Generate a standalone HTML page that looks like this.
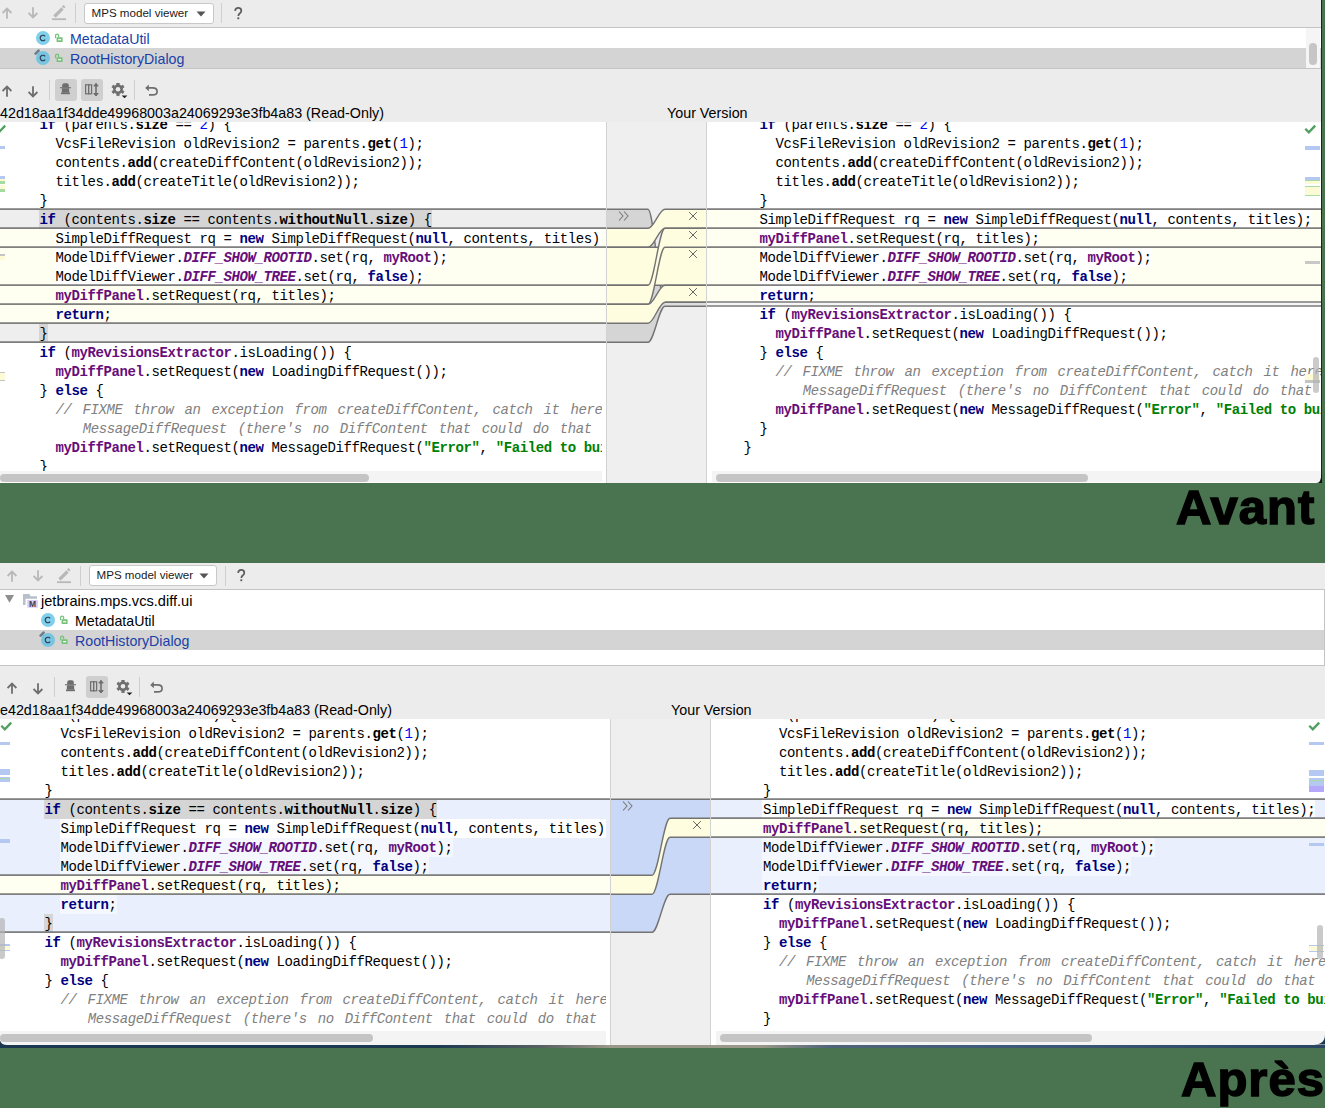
<!DOCTYPE html><html><head><meta charset="utf-8"><style>
*{margin:0;padding:0;box-sizing:border-box}
html,body{width:1325px;height:1108px;overflow:hidden;background:#4a7350;position:relative}
.ab{position:absolute}
.clip{position:absolute;overflow:hidden}
.ui{font-family:"Liberation Sans",sans-serif;white-space:nowrap}
.ln{position:absolute;font-family:"Liberation Mono",monospace;font-size:14px;letter-spacing:-0.4px;line-height:19px;height:19px;white-space:pre;color:#000;padding-top:1px}
.dd{background:#fff;border:1px solid #c8c8c8;border-radius:3px}
.big{position:absolute;font-family:"Liberation Sans",sans-serif;font-weight:bold;font-size:49px;line-height:50px;color:#000;white-space:nowrap;-webkit-text-stroke:1.5px #000;letter-spacing:1px}
</style></head><body>
<div class="ab" style="left:0;top:0px;width:1321px;height:27px;background:#ececec"></div>
<svg class="ab" style="left:2px;top:7px" width="11" height="12"><path d="M5 11.8V1.6M0.6 6L5 1.6L9.4 6" stroke="#b8b8b8" stroke-width="1.8" fill="none"/></svg>
<svg class="ab" style="left:28px;top:7px" width="11" height="12"><path d="M5 0.2V10.4M0.6 6L5 10.4L9.4 6" stroke="#b8b8b8" stroke-width="1.8" fill="none"/></svg>
<svg class="ab" style="left:51px;top:5px" width="16" height="16"><path d="M3.5 11.5L11.5 3.5" stroke="#b8b8b8" stroke-width="3.2" fill="none"/><path d="M12 2.5L13.5 1" stroke="#b8b8b8" stroke-width="3" fill="none"/><rect x="1" y="13.3" width="14" height="1.8" fill="#b8b8b8"/></svg>
<div class="ab" style="left:75px;top:3px;width:1px;height:20px;background:#cfcfcf"></div>
<div class="ab dd" style="left:83.5px;top:2.5px;width:130px;height:21px"></div>
<div class="ab ui" style="left:91.5px;top:5.0px;font-size:11.6px;line-height:16px;color:#1a1a1a">MPS model viewer</div>
<svg class="ab" style="left:195.5px;top:10.5px" width="10" height="6"><path d="M0.5 0.5H9.5L5 5.5Z" fill="#555"/></svg>
<div class="ab" style="left:221px;top:3px;width:1px;height:20px;background:#cfcfcf"></div>
<svg class="ab" style="left:233.6px;top:7.0px" width="10" height="13"><path d="M1.1 3.8Q1.5 0.9 4.2 0.9Q7.3 0.9 7.3 3.7Q7.3 5.1 5.9 6.2Q4.4 7.3 4.3 9" stroke="#5e5e5e" stroke-width="1.75" fill="none"/><rect x="3.35" y="10.3" width="1.9" height="1.9" fill="#5e5e5e"/></svg>
<div class="ab" style="left:0;top:27px;width:1321px;height:1px;background:#c4c4c4"></div>
<div class="ab" style="left:0;top:28px;width:1321px;height:40px;background:#fff"></div>
<svg class="ab" style="left:34px;top:29px" width="20" height="20"><circle cx="9" cy="9" r="7" fill="#80cfeb"/><path d="M11.1 7.3A2.75 2.75 0 1 0 11.1 10.7" stroke="#2e3c50" stroke-width="1.15" fill="none"/></svg>
<svg class="ab" style="left:53.8px;top:33px" width="10" height="11"><path d="M1.6 5.2V2.6Q1.6 1.1 3.1 1.1Q4.6 1.1 4.6 2.6V4.2" stroke="#76c27a" stroke-width="1.3" fill="none"/><rect x="2.6" y="4.2" width="6" height="4.9" rx="0.6" fill="#76c27a"/><rect x="4.1" y="6.1" width="3" height="1.2" fill="#fff"/></svg>
<div class="ab ui" style="left:70px;top:31px;font-size:14.2px;line-height:16px;color:#1a3fa8">MetadataUtil</div>
<div class="ab" style="left:0;top:48px;width:1321px;height:20px;background:#d4d4d4"></div>
<svg class="ab" style="left:34px;top:49px" width="20" height="20"><circle cx="9" cy="9" r="7" fill="#78c4e0"/><path d="M11.1 7.3A2.75 2.75 0 1 0 11.1 10.7" stroke="#2e3c50" stroke-width="1.15" fill="none"/><path d="M1.6 4.6L4.6 1.6" stroke="#6e7c8c" stroke-width="2.6" stroke-linecap="round"/></svg>
<svg class="ab" style="left:53.8px;top:53px" width="10" height="11"><path d="M1.6 5.2V2.6Q1.6 1.1 3.1 1.1Q4.6 1.1 4.6 2.6V4.2" stroke="#76c27a" stroke-width="1.3" fill="none"/><rect x="2.6" y="4.2" width="6" height="4.9" rx="0.6" fill="#76c27a"/><rect x="4.1" y="6.1" width="3" height="1.2" fill="#fff"/></svg>
<div class="ab ui" style="left:70px;top:51px;font-size:14.2px;line-height:16px;color:#1a3fa8">RootHistoryDialog</div>
<div class="ab" style="left:0;top:68px;width:1321px;height:1px;background:#c4c4c4"></div>
<div class="ab" style="left:1306px;top:28px;width:14px;height:40px;background:#f5f5f5"></div>
<div class="ab" style="left:1309px;top:43px;width:8px;height:22px;border-radius:4px;background:#c6c6c6"></div>
<div class="ab" style="left:0;top:69px;width:1321px;height:53px;background:#ececec"></div>
<svg class="ab" style="left:2px;top:85px" width="11" height="12"><path d="M5 11.8V1.6M0.6 6L5 1.6L9.4 6" stroke="#6e6e6e" stroke-width="1.8" fill="none"/></svg>
<svg class="ab" style="left:28px;top:85.5px" width="11" height="12"><path d="M5 0.2V10.4M0.6 6L5 10.4L9.4 6" stroke="#6e6e6e" stroke-width="1.8" fill="none"/></svg>
<div class="ab" style="left:49px;top:80px;width:1px;height:20px;background:#cfcfcf"></div>
<div class="ab" style="left:55px;top:79px;width:22px;height:22px;border-radius:3px;background:#cfcfcf"></div>
<svg class="ab" style="left:59px;top:83px" width="14" height="13"><path d="M3.2 4.6V2.2Q3.2 0.2 5.2 0.2H7.8Q9.8 0.2 9.8 2.2V4.6Z" fill="#6e6e6e"/><rect x="1" y="4.2" width="11" height="1.1" fill="#6e6e6e"/><path d="M3 5.3H10L10.3 9.8H2.7Z" fill="#6e6e6e"/><rect x="2" y="9.6" width="9" height="1.6" fill="#6e6e6e"/></svg>
<div class="ab" style="left:81px;top:79px;width:22px;height:22px;border-radius:3px;background:#cfcfcf"></div>
<svg class="ab" style="left:84px;top:83px" width="16" height="14"><rect x="1.6" y="1.8" width="3" height="9" stroke="#6e6e6e" stroke-width="1.2" fill="none"/><rect x="4.6" y="1.8" width="3" height="9" stroke="#6e6e6e" stroke-width="1.2" fill="none"/><path d="M12 0.5V13" stroke="#6e6e6e" stroke-width="1.6"/><path d="M9.8 3L12 0.5L14.2 3Z M9.8 10.5L12 13L14.2 10.5Z" fill="#6e6e6e" stroke="#6e6e6e" stroke-width="1"/></svg>
<svg class="ab" style="left:110px;top:83px" width="18" height="17"><g transform="translate(8,6.3)"><path d="M2.30 -3.98L1.11 -4.46L1.22 -6.28L-1.22 -6.28L-1.11 -4.46L-2.30 -3.98L-3.31 -3.20L-4.83 -4.20L-6.05 -2.08L-4.42 -1.27L-4.60 0.00L-4.42 1.27L-6.05 2.08L-4.83 4.20L-3.31 3.20L-2.30 3.98L-1.11 4.46L-1.22 6.28L1.22 6.28L1.11 4.46L2.30 3.98L3.31 3.20L4.83 4.20L6.05 2.08L4.42 1.27L4.60 0.00L4.42 -1.27L6.05 -2.08L4.83 -4.20L3.31 -3.20Z" fill="#6e6e6e" stroke="#6e6e6e" stroke-width="0.8" stroke-linejoin="round"/><circle r="2.3" fill="#ececec"/></g><path d="M11.6 12.4H17.4L14.5 15.3Z" fill="#222"/></svg>
<div class="ab" style="left:134px;top:80px;width:1px;height:20px;background:#cfcfcf"></div>
<svg class="ab" style="left:144px;top:83px" width="16" height="14"><path d="M4 4.9H8.6Q13.1 4.9 13.1 8.4Q13.1 11.9 8.6 11.9H5" stroke="#6e6e6e" stroke-width="1.7" fill="none"/><path d="M1.2 4.9L4.8 1.5V8.3Z" fill="#6e6e6e"/></svg>
<div class="ab ui" style="left:0px;top:105px;font-size:14.3px;line-height:16px;color:#000;white-space:nowrap">42d18aa1f34dde49968003a24069293e3fb4a83 (Read-Only)</div>
<div class="ab ui" style="left:667px;top:105px;font-size:14.3px;line-height:16px;color:#000;white-space:nowrap">Your Version</div>
<div class="ab" style="left:0;top:122px;width:606px;height:361px;background:#fff"></div>
<div class="ab" style="left:606px;top:122px;width:100px;height:361px;background:#efefef"></div>
<div class="ab" style="left:706px;top:122px;width:615px;height:361px;background:#fff"></div>
<div class="clip" style="left:0;top:122px;width:606px;height:361px">
<div class="ab" style="left:0;top:88px;width:606px;height:19px;background:#eeeeee"></div>
<div class="ab" style="left:0;top:107px;width:606px;height:95px;background:#fffff1"></div>
<div class="ab" style="left:0;top:202px;width:606px;height:19px;background:#eeeeee"></div>
<div class="clip" style="left:0;top:0;width:602px;height:361px">
<div class="ln" style="left:39.5px;top:-7px;"><span style="color:#000080;font-weight:bold">if</span> (parents.<span style="font-weight:bold">size</span> == <span style="color:#0000ff">2</span>) {</div>
<div class="ln" style="left:55.5px;top:12px;">VcsFileRevision oldRevision2 = parents.<span style="font-weight:bold">get</span>(<span style="color:#0000ff">1</span>);</div>
<div class="ln" style="left:55.5px;top:31px;">contents.<span style="font-weight:bold">add</span>(createDiffContent(oldRevision2));</div>
<div class="ln" style="left:55.5px;top:50px;">titles.<span style="font-weight:bold">add</span>(createTitle(oldRevision2));</div>
<div class="ln" style="left:39.5px;top:69px;">}</div>
<div class="ln" style="left:38.5px;top:88px;background:#d5d5d5;padding-left:1px;"><span style="color:#000080;font-weight:bold">if</span> (contents.<span style="font-weight:bold">size</span> == contents.<span style="font-weight:bold">withoutNull</span>.<span style="font-weight:bold">size</span>) {</div>
<div class="ln" style="left:54.5px;top:107px;background:#ffffff;padding-left:1px;">SimpleDiffRequest rq = <span style="color:#000080;font-weight:bold">new</span> SimpleDiffRequest(<span style="color:#000080;font-weight:bold">null</span>, contents, titles);</div>
<div class="ln" style="left:54.5px;top:126px;background:#ffffff;padding-left:1px;">ModelDiffViewer.<span style="color:#660e7a;font-weight:bold;font-style:italic">DIFF_SHOW_ROOTID</span>.set(rq, <span style="color:#660e7a;font-weight:bold">myRoot</span>);</div>
<div class="ln" style="left:54.5px;top:145px;background:#ffffff;padding-left:1px;">ModelDiffViewer.<span style="color:#660e7a;font-weight:bold;font-style:italic">DIFF_SHOW_TREE</span>.set(rq, <span style="color:#000080;font-weight:bold">false</span>);</div>
<div class="ln" style="left:55.5px;top:164px;"><span style="color:#660e7a;font-weight:bold">myDiffPanel</span>.setRequest(rq, titles);</div>
<div class="ln" style="left:55.5px;top:183px;"><span style="color:#000080;font-weight:bold">return</span>;</div>
<div class="ln" style="left:38.5px;top:202px;background:#d5d5d5;padding-left:1px;">}</div>
<div class="ln" style="left:39.5px;top:221px;"><span style="color:#000080;font-weight:bold">if</span> (<span style="color:#660e7a;font-weight:bold">myRevisionsExtractor</span>.isLoading()) {</div>
<div class="ln" style="left:55.5px;top:240px;"><span style="color:#660e7a;font-weight:bold">myDiffPanel</span>.setRequest(<span style="color:#000080;font-weight:bold">new</span> LoadingDiffRequest());</div>
<div class="ln" style="left:39.5px;top:259px;">} <span style="color:#000080;font-weight:bold">else</span> {</div>
<div class="ln" style="left:55.5px;top:278px;word-spacing:3px;"><span style="color:#808080;font-style:italic">// FIXME throw an exception from createDiffContent, catch it here and create</span></div>
<div class="ln" style="left:82.7px;top:297px;word-spacing:3px;"><span style="color:#808080;font-style:italic">MessageDiffRequest (there&#x27;s no DiffContent that could do that</span></div>
<div class="ln" style="left:55.5px;top:316px;"><span style="color:#660e7a;font-weight:bold">myDiffPanel</span>.setRequest(<span style="color:#000080;font-weight:bold">new</span> MessageDiffRequest(<span style="color:#008000;font-weight:bold">&quot;Error&quot;</span>, <span style="color:#008000;font-weight:bold">&quot;Failed to build diff&quot;</span>));</div>
<div class="ln" style="left:39.5px;top:335px;">}</div>
</div>
<svg class="ab" style="left:0;top:85px" width="606" height="4"><rect x="0" y="1.3" width="606" height="1.6" fill="#737373"/></svg>
<svg class="ab" style="left:0;top:104px" width="606" height="4"><rect x="0" y="1.3" width="606" height="1.6" fill="#737373"/></svg>
<svg class="ab" style="left:0;top:123px" width="606" height="4"><rect x="0" y="1.3" width="606" height="1.6" fill="#737373"/></svg>
<svg class="ab" style="left:0;top:161px" width="606" height="4"><rect x="0" y="1.3" width="606" height="1.6" fill="#737373"/></svg>
<svg class="ab" style="left:0;top:180px" width="606" height="4"><rect x="0" y="1.3" width="606" height="1.6" fill="#737373"/></svg>
<svg class="ab" style="left:0;top:199px" width="606" height="4"><rect x="0" y="1.3" width="606" height="1.6" fill="#737373"/></svg>
<svg class="ab" style="left:0;top:218px" width="606" height="4"><rect x="0" y="1.3" width="606" height="1.6" fill="#737373"/></svg>
</div>
<div class="clip" style="left:707px;top:122px;width:614px;height:361px">
<div class="ab" style="left:0;top:88px;width:1321px;height:95px;background:#fffff1"></div>
<div class="ln" style="left:52.5px;top:-7px;"><span style="color:#000080;font-weight:bold">if</span> (parents.<span style="font-weight:bold">size</span> == <span style="color:#0000ff">2</span>) {</div>
<div class="ln" style="left:68.5px;top:12px;">VcsFileRevision oldRevision2 = parents.<span style="font-weight:bold">get</span>(<span style="color:#0000ff">1</span>);</div>
<div class="ln" style="left:68.5px;top:31px;">contents.<span style="font-weight:bold">add</span>(createDiffContent(oldRevision2));</div>
<div class="ln" style="left:68.5px;top:50px;">titles.<span style="font-weight:bold">add</span>(createTitle(oldRevision2));</div>
<div class="ln" style="left:52.5px;top:69px;">}</div>
<div class="ln" style="left:51.5px;top:88px;background:#ffffff;padding-left:1px;">SimpleDiffRequest rq = <span style="color:#000080;font-weight:bold">new</span> SimpleDiffRequest(<span style="color:#000080;font-weight:bold">null</span>, contents, titles);</div>
<div class="ln" style="left:51.5px;top:107px;background:#ffffff;padding-left:1px;"><span style="color:#660e7a;font-weight:bold">myDiffPanel</span>.setRequest(rq, titles);</div>
<div class="ln" style="left:51.5px;top:126px;background:#ffffff;padding-left:1px;">ModelDiffViewer.<span style="color:#660e7a;font-weight:bold;font-style:italic">DIFF_SHOW_ROOTID</span>.set(rq, <span style="color:#660e7a;font-weight:bold">myRoot</span>);</div>
<div class="ln" style="left:51.5px;top:145px;background:#ffffff;padding-left:1px;">ModelDiffViewer.<span style="color:#660e7a;font-weight:bold;font-style:italic">DIFF_SHOW_TREE</span>.set(rq, <span style="color:#000080;font-weight:bold">false</span>);</div>
<div class="ln" style="left:51.5px;top:164px;background:#ffffff;padding-left:1px;"><span style="color:#000080;font-weight:bold">return</span>;</div>
<div class="ln" style="left:52.5px;top:183px;"><span style="color:#000080;font-weight:bold">if</span> (<span style="color:#660e7a;font-weight:bold">myRevisionsExtractor</span>.isLoading()) {</div>
<div class="ln" style="left:68.5px;top:202px;"><span style="color:#660e7a;font-weight:bold">myDiffPanel</span>.setRequest(<span style="color:#000080;font-weight:bold">new</span> LoadingDiffRequest());</div>
<div class="ln" style="left:52.5px;top:221px;">} <span style="color:#000080;font-weight:bold">else</span> {</div>
<div class="ln" style="left:68.5px;top:240px;word-spacing:3px;"><span style="color:#808080;font-style:italic">// FIXME throw an exception from createDiffContent, catch it here and create</span></div>
<div class="ln" style="left:95.7px;top:259px;word-spacing:3px;"><span style="color:#808080;font-style:italic">MessageDiffRequest (there&#x27;s no DiffContent that could do that</span></div>
<div class="ln" style="left:68.5px;top:278px;"><span style="color:#660e7a;font-weight:bold">myDiffPanel</span>.setRequest(<span style="color:#000080;font-weight:bold">new</span> MessageDiffRequest(<span style="color:#008000;font-weight:bold">&quot;Error&quot;</span>, <span style="color:#008000;font-weight:bold">&quot;Failed to build diff&quot;</span>));</div>
<div class="ln" style="left:52.5px;top:297px;">}</div>
<div class="ln" style="left:36.5px;top:316px;">}</div>
<svg class="ab" style="left:0;top:178.2px" width="1321" height="8"><rect x="0" y="2" width="1321" height="4.0" fill="#f6f6f6"/><rect x="0" y="1.3" width="1321" height="1.4" fill="#737373"/><rect x="0" y="5.3" width="1321" height="1.4" fill="#737373"/></svg>
<svg class="ab" style="left:0;top:85px" width="1321" height="4"><rect x="0" y="1.3" width="1321" height="1.6" fill="#737373"/></svg>
<svg class="ab" style="left:0;top:104px" width="1321" height="4"><rect x="0" y="1.3" width="1321" height="1.6" fill="#737373"/></svg>
<svg class="ab" style="left:0;top:123px" width="1321" height="4"><rect x="0" y="1.3" width="1321" height="1.6" fill="#737373"/></svg>
<svg class="ab" style="left:0;top:161px" width="1321" height="4"><rect x="0" y="1.3" width="1321" height="1.6" fill="#737373"/></svg>
</div>
<svg class="ab" style="left:606px;top:122px" width="101" height="361">
<path d="M0 87.3H42C47.95 87.3 53.05 180.2 59 180.2H100V184.2H59C53.05 184.2 47.95 220.3 42 220.3H0Z" fill="#d5d5d5"/>
<path d="M0 87.3H42C47.95 87.3 53.05 180.2 59 180.2H100" stroke="#737373" stroke-width="1.4" fill="none"/>
<path d="M0 220.3H42C47.95 220.3 53.05 184.2 59 184.2H100" stroke="#737373" stroke-width="1.4" fill="none"/>
<path d="M0 106.3H42C47.95 106.3 53.05 87.3 59 87.3H100V106.3H59C53.05 106.3 47.95 125.3 42 125.3H0Z" fill="#fefde0"/>
<path d="M0 106.3H42C47.95 106.3 53.05 87.3 59 87.3H100" stroke="#737373" stroke-width="1.4" fill="none"/>
<path d="M0 125.3H42C47.95 125.3 53.05 106.3 59 106.3H100" stroke="#737373" stroke-width="1.4" fill="none"/>
<path d="M0 125.3H42C47.95 125.3 53.05 125.3 59 125.3H100V163.3H59C53.05 163.3 47.95 163.3 42 163.3H0Z" fill="#fefde0"/>
<path d="M0 125.3H42C47.95 125.3 53.05 125.3 59 125.3H100" stroke="#737373" stroke-width="1.4" fill="none"/>
<path d="M0 163.3H42C47.95 163.3 53.05 163.3 59 163.3H100" stroke="#737373" stroke-width="1.4" fill="none"/>
<path d="M0 163.3H42C47.95 163.3 53.05 106.3 59 106.3H100V125.3H59C53.05 125.3 47.95 182.3 42 182.3H0Z" fill="#fefde0"/>
<path d="M0 163.3H42C47.95 163.3 53.05 106.3 59 106.3H100" stroke="#737373" stroke-width="1.4" fill="none"/>
<path d="M0 182.3H42C47.95 182.3 53.05 125.3 59 125.3H100" stroke="#737373" stroke-width="1.4" fill="none"/>
<path d="M0 182.3H42C47.95 182.3 53.05 163.3 59 163.3H100V180.2H59C53.05 180.2 47.95 201.3 42 201.3H0Z" fill="#fefde0"/>
<path d="M0 182.3H42C47.95 182.3 53.05 163.3 59 163.3H100" stroke="#737373" stroke-width="1.4" fill="none"/>
<path d="M0 201.3H42C47.95 201.3 53.05 180.2 59 180.2H100" stroke="#737373" stroke-width="1.4" fill="none"/>
<rect x="59" y="180.2" width="41" height="4.0" fill="#dedede"/>
<path d="M59 180.2H100M59 184.2H100" stroke="#737373" stroke-width="1.4"/>
<rect x="0" y="0" width="1" height="361" fill="#d2d2d2"/><rect x="100" y="0" width="1" height="361" fill="#d2d2d2"/>
<path d="M83.1 90.1L90.9 97.9M90.9 90.1L83.1 97.9" stroke="#666" stroke-width="1.0"/>
<path d="M83.1 109.1L90.9 116.9M90.9 109.1L83.1 116.9" stroke="#666" stroke-width="1.0"/>
<path d="M83.1 128.1L90.9 135.9M90.9 128.1L83.1 135.9" stroke="#666" stroke-width="1.0"/>
<path d="M83.1 166.1L90.9 173.9M90.9 166.1L83.1 173.9" stroke="#666" stroke-width="1.0"/>
<path d="M13 89.5L17 94L13 98.5M18 89.5L22 94L18 98.5" stroke="#7a7a7a" stroke-width="1.1" fill="none"/>
</svg>
<div class="ab" style="left:0;top:471px;width:602px;height:11px;background:#f4f4f4"></div>
<div class="ab" style="left:0;top:474px;width:369px;height:8px;border-radius:4px;background:#c4c4c4"></div>
<div class="ab" style="left:712px;top:471px;width:609px;height:11px;background:#f4f4f4"></div>
<div class="ab" style="left:716px;top:474px;width:372px;height:8px;border-radius:4px;background:#c4c4c4"></div>
<div class="ab" style="left:0px;top:146px;width:5px;height:3px;background:#b4c8f2"></div>
<div class="ab" style="left:0px;top:176px;width:5px;height:3px;background:#b4c8f2"></div>
<div class="ab" style="left:0px;top:179px;width:5px;height:2px;background:#fdfbd6"></div>
<div class="ab" style="left:0px;top:181px;width:5px;height:3px;background:#a6dba4"></div>
<div class="ab" style="left:0px;top:185px;width:5px;height:4px;background:#fdfbd6"></div>
<div class="ab" style="left:0px;top:189px;width:5px;height:3px;background:#a6dba4"></div>
<div class="ab" style="left:0px;top:254px;width:5px;height:2px;background:#c4c4c4"></div>
<div class="ab" style="left:0px;top:256px;width:5px;height:4px;background:#fdfbd6"></div>
<div class="ab" style="left:0px;top:372px;width:5px;height:1px;background:#c4c4c4"></div>
<div class="ab" style="left:0px;top:373px;width:5px;height:7px;background:#fdfbd6"></div>
<div class="ab" style="left:0px;top:380px;width:5px;height:1px;background:#c4c4c4"></div>
<div class="ab" style="left:1305px;top:146px;width:15px;height:4px;background:#b4c8f2"></div>
<div class="ab" style="left:1305px;top:177px;width:15px;height:3px;background:#b4c8f2"></div>
<div class="ab" style="left:1305px;top:180px;width:15px;height:1px;background:#a6dba4"></div>
<div class="ab" style="left:1305px;top:181px;width:15px;height:3px;background:#fdfbd6"></div>
<div class="ab" style="left:1305px;top:186px;width:15px;height:1px;background:#a6dba4"></div>
<div class="ab" style="left:1305px;top:187px;width:15px;height:8px;background:#fdfbd6"></div>
<div class="ab" style="left:1305px;top:195px;width:15px;height:1px;background:#a6dba4"></div>
<div class="ab" style="left:1305px;top:261px;width:15px;height:3px;background:#c8c8c8"></div>
<div class="ab" style="left:1305px;top:374px;width:15px;height:6px;background:#fdfbd6"></div>
<div class="ab" style="left:1305px;top:380px;width:15px;height:3px;background:#c4c4c4"></div>
<svg class="ab" style="left:-6px;top:124px" width="13" height="10"><path d="M1.3 4.8L4.8 8.3L11.2 1.6" stroke="#4f9f5f" stroke-width="2.3" fill="none" stroke-linejoin="miter"/></svg>
<svg class="ab" style="left:1304px;top:124px" width="13" height="10"><path d="M1.3 4.8L4.8 8.3L11.2 1.6" stroke="#4f9f5f" stroke-width="2.3" fill="none" stroke-linejoin="miter"/></svg>
<div class="ab" style="left:1313px;top:357px;width:6px;height:36px;border-radius:3px;background:rgba(180,180,180,0.7)"></div>
<div class="ab" style="left:1321px;top:0;width:1px;height:483px;background:#142434"></div>
<svg class="ab" style="left:1310px;top:470px" width="13" height="14"><path d="M11.2 4.5Q11.2 13 6.5 13H12V4.5Z" fill="#101312"/></svg>
<div class="big" style="left:1176px;top:482px">Avant</div>
<div class="ab" style="left:0;top:563px;width:1325px;height:26px;background:#ececec"></div>
<svg class="ab" style="left:7px;top:570px" width="11" height="12"><path d="M5 11.8V1.6M0.6 6L5 1.6L9.4 6" stroke="#b8b8b8" stroke-width="1.8" fill="none"/></svg>
<svg class="ab" style="left:33px;top:570px" width="11" height="12"><path d="M5 0.2V10.4M0.6 6L5 10.4L9.4 6" stroke="#b8b8b8" stroke-width="1.8" fill="none"/></svg>
<svg class="ab" style="left:56px;top:568px" width="16" height="16"><path d="M3.5 11.5L11.5 3.5" stroke="#b8b8b8" stroke-width="3.2" fill="none"/><path d="M12 2.5L13.5 1" stroke="#b8b8b8" stroke-width="3" fill="none"/><rect x="1" y="13.3" width="14" height="1.8" fill="#b8b8b8"/></svg>
<div class="ab" style="left:80px;top:566px;width:1px;height:20px;background:#cfcfcf"></div>
<div class="ab dd" style="left:88.5px;top:564.5px;width:128px;height:21px"></div>
<div class="ab ui" style="left:96.5px;top:567.0px;font-size:11.6px;line-height:16px;color:#1a1a1a">MPS model viewer</div>
<svg class="ab" style="left:199px;top:572.5px" width="10" height="6"><path d="M0.5 0.5H9.5L5 5.5Z" fill="#555"/></svg>
<div class="ab" style="left:224.5px;top:566px;width:1px;height:20px;background:#cfcfcf"></div>
<svg class="ab" style="left:236.6px;top:569.1px" width="10" height="13"><path d="M1.1 3.8Q1.5 0.9 4.2 0.9Q7.3 0.9 7.3 3.7Q7.3 5.1 5.9 6.2Q4.4 7.3 4.3 9" stroke="#5e5e5e" stroke-width="1.75" fill="none"/><rect x="3.35" y="10.3" width="1.9" height="1.9" fill="#5e5e5e"/></svg>
<div class="ab" style="left:0;top:589px;width:1325px;height:1px;background:#c4c4c4"></div>
<div class="ab" style="left:0;top:590px;width:1325px;height:75px;background:#fff"></div>
<svg class="ab" style="left:5px;top:595px" width="10" height="9"><path d="M0 0H9L4.5 7.8Z" fill="#8f8f8f"/></svg>
<svg class="ab" style="left:23px;top:594px" width="16" height="15"><path d="M0 0H6.5L7.5 2.2H14V4.8H2.5V11H0Z" fill="#b8c0cc"/><rect x="4.2" y="6" width="10.6" height="7.7" fill="#dcccfa"/><text x="9.5" y="12.6" font-size="8.5" font-weight="bold" font-family="Liberation Sans" text-anchor="middle" fill="#444">M</text></svg>
<div class="ab ui" style="left:41px;top:592.5px;font-size:14.6px;line-height:16px;color:#000">jetbrains.mps.vcs.diff.ui</div>
<svg class="ab" style="left:39px;top:611px" width="20" height="20"><circle cx="9" cy="9" r="7" fill="#80cfeb"/><path d="M11.1 7.3A2.75 2.75 0 1 0 11.1 10.7" stroke="#2e3c50" stroke-width="1.15" fill="none"/></svg>
<svg class="ab" style="left:58.8px;top:615px" width="10" height="11"><path d="M1.6 5.2V2.6Q1.6 1.1 3.1 1.1Q4.6 1.1 4.6 2.6V4.2" stroke="#76c27a" stroke-width="1.3" fill="none"/><rect x="2.6" y="4.2" width="6" height="4.9" rx="0.6" fill="#76c27a"/><rect x="4.1" y="6.1" width="3" height="1.2" fill="#fff"/></svg>
<div class="ab ui" style="left:75px;top:613px;font-size:14.2px;line-height:16px;color:#000">MetadataUtil</div>
<div class="ab" style="left:0;top:630px;width:1325px;height:20px;background:#d4d4d4"></div>
<svg class="ab" style="left:39px;top:631px" width="20" height="20"><circle cx="9" cy="9" r="7" fill="#78c4e0"/><path d="M11.1 7.3A2.75 2.75 0 1 0 11.1 10.7" stroke="#2e3c50" stroke-width="1.15" fill="none"/><path d="M1.6 4.6L4.6 1.6" stroke="#6e7c8c" stroke-width="2.6" stroke-linecap="round"/></svg>
<svg class="ab" style="left:58.8px;top:635px" width="10" height="11"><path d="M1.6 5.2V2.6Q1.6 1.1 3.1 1.1Q4.6 1.1 4.6 2.6V4.2" stroke="#76c27a" stroke-width="1.3" fill="none"/><rect x="2.6" y="4.2" width="6" height="4.9" rx="0.6" fill="#76c27a"/><rect x="4.1" y="6.1" width="3" height="1.2" fill="#fff"/></svg>
<div class="ab ui" style="left:75px;top:633px;font-size:14.2px;line-height:16px;color:#1a3fa8">RootHistoryDialog</div>
<div class="ab" style="left:0;top:665px;width:1325px;height:1px;background:#c4c4c4"></div>
<div class="ab" style="left:1324px;top:589px;width:1px;height:77px;background:#c4c4c4"></div>
<div class="ab" style="left:0;top:666px;width:1325px;height:53px;background:#ececec"></div>
<svg class="ab" style="left:7px;top:682px" width="11" height="12"><path d="M5 11.8V1.6M0.6 6L5 1.6L9.4 6" stroke="#6e6e6e" stroke-width="1.8" fill="none"/></svg>
<svg class="ab" style="left:33px;top:682.5px" width="11" height="12"><path d="M5 0.2V10.4M0.6 6L5 10.4L9.4 6" stroke="#6e6e6e" stroke-width="1.8" fill="none"/></svg>
<div class="ab" style="left:54px;top:677px;width:1px;height:20px;background:#cfcfcf"></div>
<svg class="ab" style="left:64px;top:680px" width="14" height="13"><path d="M3.2 4.6V2.2Q3.2 0.2 5.2 0.2H7.8Q9.8 0.2 9.8 2.2V4.6Z" fill="#6e6e6e"/><rect x="1" y="4.2" width="11" height="1.1" fill="#6e6e6e"/><path d="M3 5.3H10L10.3 9.8H2.7Z" fill="#6e6e6e"/><rect x="2" y="9.6" width="9" height="1.6" fill="#6e6e6e"/></svg>
<div class="ab" style="left:86px;top:676px;width:22px;height:22px;border-radius:3px;background:#cfcfcf"></div>
<svg class="ab" style="left:89px;top:680px" width="16" height="14"><rect x="1.6" y="1.8" width="3" height="9" stroke="#6e6e6e" stroke-width="1.2" fill="none"/><rect x="4.6" y="1.8" width="3" height="9" stroke="#6e6e6e" stroke-width="1.2" fill="none"/><path d="M12 0.5V13" stroke="#6e6e6e" stroke-width="1.6"/><path d="M9.8 3L12 0.5L14.2 3Z M9.8 10.5L12 13L14.2 10.5Z" fill="#6e6e6e" stroke="#6e6e6e" stroke-width="1"/></svg>
<svg class="ab" style="left:115px;top:680px" width="18" height="17"><g transform="translate(8,6.3)"><path d="M2.30 -3.98L1.11 -4.46L1.22 -6.28L-1.22 -6.28L-1.11 -4.46L-2.30 -3.98L-3.31 -3.20L-4.83 -4.20L-6.05 -2.08L-4.42 -1.27L-4.60 0.00L-4.42 1.27L-6.05 2.08L-4.83 4.20L-3.31 3.20L-2.30 3.98L-1.11 4.46L-1.22 6.28L1.22 6.28L1.11 4.46L2.30 3.98L3.31 3.20L4.83 4.20L6.05 2.08L4.42 1.27L4.60 0.00L4.42 -1.27L6.05 -2.08L4.83 -4.20L3.31 -3.20Z" fill="#6e6e6e" stroke="#6e6e6e" stroke-width="0.8" stroke-linejoin="round"/><circle r="2.3" fill="#ececec"/></g><path d="M11.6 12.4H17.4L14.5 15.3Z" fill="#222"/></svg>
<div class="ab" style="left:139px;top:677px;width:1px;height:20px;background:#cfcfcf"></div>
<svg class="ab" style="left:149px;top:680px" width="16" height="14"><path d="M4 4.9H8.6Q13.1 4.9 13.1 8.4Q13.1 11.9 8.6 11.9H5" stroke="#6e6e6e" stroke-width="1.7" fill="none"/><path d="M1.2 4.9L4.8 1.5V8.3Z" fill="#6e6e6e"/></svg>
<div class="ab ui" style="left:0px;top:702px;font-size:14.3px;line-height:16px;color:#000;white-space:nowrap">e42d18aa1f34dde49968003a24069293e3fb4a83 (Read-Only)</div>
<div class="ab ui" style="left:671px;top:702px;font-size:14.3px;line-height:16px;color:#000;white-space:nowrap">Your Version</div>
<div class="ab" style="left:0;top:719px;width:610px;height:326px;background:#fff"></div>
<div class="ab" style="left:610px;top:719px;width:100px;height:326px;background:#efefef"></div>
<div class="ab" style="left:710px;top:719px;width:615px;height:326px;background:#fff"></div>
<div class="clip" style="left:0;top:719px;width:610px;height:326px">
<div class="ab" style="left:0;top:81px;width:610px;height:133px;background:#e9effd"></div>
<div class="ab" style="left:0;top:157px;width:610px;height:19px;background:#fffff1"></div>
<div class="clip" style="left:0;top:0;width:606px;height:326px">
<div class="ln" style="left:44.5px;top:-14px;"><span style="color:#000080;font-weight:bold">if</span> (parents.<span style="font-weight:bold">size</span> == <span style="color:#0000ff">2</span>) {</div>
<div class="ln" style="left:60.5px;top:5px;">VcsFileRevision oldRevision2 = parents.<span style="font-weight:bold">get</span>(<span style="color:#0000ff">1</span>);</div>
<div class="ln" style="left:60.5px;top:24px;">contents.<span style="font-weight:bold">add</span>(createDiffContent(oldRevision2));</div>
<div class="ln" style="left:60.5px;top:43px;">titles.<span style="font-weight:bold">add</span>(createTitle(oldRevision2));</div>
<div class="ln" style="left:44.5px;top:62px;">}</div>
<div class="ln" style="left:43.5px;top:81px;background:#d5d5d5;padding-left:1px;"><span style="color:#000080;font-weight:bold">if</span> (contents.<span style="font-weight:bold">size</span> == contents.<span style="font-weight:bold">withoutNull</span>.<span style="font-weight:bold">size</span>) {</div>
<div class="ln" style="left:59.5px;top:100px;background:#ffffff;padding-left:1px;">SimpleDiffRequest rq = <span style="color:#000080;font-weight:bold">new</span> SimpleDiffRequest(<span style="color:#000080;font-weight:bold">null</span>, contents, titles);</div>
<div class="ln" style="left:59.5px;top:119px;background:#f4f7fd;padding-left:1px;">ModelDiffViewer.<span style="color:#660e7a;font-weight:bold;font-style:italic">DIFF_SHOW_ROOTID</span>.set(rq, <span style="color:#660e7a;font-weight:bold">myRoot</span>);</div>
<div class="ln" style="left:59.5px;top:138px;background:#f4f7fd;padding-left:1px;">ModelDiffViewer.<span style="color:#660e7a;font-weight:bold;font-style:italic">DIFF_SHOW_TREE</span>.set(rq, <span style="color:#000080;font-weight:bold">false</span>);</div>
<div class="ln" style="left:60.5px;top:157px;"><span style="color:#660e7a;font-weight:bold">myDiffPanel</span>.setRequest(rq, titles);</div>
<div class="ln" style="left:59.5px;top:176px;background:#f4f7fd;padding-left:1px;"><span style="color:#000080;font-weight:bold">return</span>;</div>
<div class="ln" style="left:43.5px;top:195px;background:#d5d5d5;padding-left:1px;">}</div>
<div class="ln" style="left:44.5px;top:214px;"><span style="color:#000080;font-weight:bold">if</span> (<span style="color:#660e7a;font-weight:bold">myRevisionsExtractor</span>.isLoading()) {</div>
<div class="ln" style="left:60.5px;top:233px;"><span style="color:#660e7a;font-weight:bold">myDiffPanel</span>.setRequest(<span style="color:#000080;font-weight:bold">new</span> LoadingDiffRequest());</div>
<div class="ln" style="left:44.5px;top:252px;">} <span style="color:#000080;font-weight:bold">else</span> {</div>
<div class="ln" style="left:60.5px;top:271px;word-spacing:3px;"><span style="color:#808080;font-style:italic">// FIXME throw an exception from createDiffContent, catch it here and create</span></div>
<div class="ln" style="left:87.7px;top:290px;word-spacing:3px;"><span style="color:#808080;font-style:italic">MessageDiffRequest (there&#x27;s no DiffContent that could do that</span></div>
<div class="ln" style="left:60.5px;top:309px;"><span style="color:#660e7a;font-weight:bold">myDiffPanel</span>.setRequest(<span style="color:#000080;font-weight:bold">new</span> MessageDiffRequest(<span style="color:#008000;font-weight:bold">&quot;Error&quot;</span>, <span style="color:#008000;font-weight:bold">&quot;Failed to build diff&quot;</span>));</div>
<div class="ln" style="left:44.5px;top:328px;">}</div>
</div>
<svg class="ab" style="left:0;top:78px" width="610" height="4"><rect x="0" y="1.3" width="610" height="1.6" fill="#737373"/></svg>
<svg class="ab" style="left:0;top:154px" width="610" height="4"><rect x="0" y="1.3" width="610" height="1.6" fill="#737373"/></svg>
<svg class="ab" style="left:0;top:173px" width="610" height="4"><rect x="0" y="1.3" width="610" height="1.6" fill="#737373"/></svg>
<svg class="ab" style="left:0;top:211px" width="610" height="4"><rect x="0" y="1.3" width="610" height="1.6" fill="#737373"/></svg>
</div>
<div class="clip" style="left:711px;top:719px;width:614px;height:326px">
<div class="ab" style="left:0;top:81px;width:1325px;height:95px;background:#e9effd"></div>
<div class="ab" style="left:0;top:100px;width:1325px;height:19px;background:#fffff1"></div>
<div class="ln" style="left:52px;top:-14px;"><span style="color:#000080;font-weight:bold">if</span> (parents.<span style="font-weight:bold">size</span> == <span style="color:#0000ff">2</span>) {</div>
<div class="ln" style="left:68px;top:5px;">VcsFileRevision oldRevision2 = parents.<span style="font-weight:bold">get</span>(<span style="color:#0000ff">1</span>);</div>
<div class="ln" style="left:68px;top:24px;">contents.<span style="font-weight:bold">add</span>(createDiffContent(oldRevision2));</div>
<div class="ln" style="left:68px;top:43px;">titles.<span style="font-weight:bold">add</span>(createTitle(oldRevision2));</div>
<div class="ln" style="left:52px;top:62px;">}</div>
<div class="ln" style="left:51px;top:81px;background:#ffffff;padding-left:1px;">SimpleDiffRequest rq = <span style="color:#000080;font-weight:bold">new</span> SimpleDiffRequest(<span style="color:#000080;font-weight:bold">null</span>, contents, titles);</div>
<div class="ln" style="left:52px;top:100px;"><span style="color:#660e7a;font-weight:bold">myDiffPanel</span>.setRequest(rq, titles);</div>
<div class="ln" style="left:51px;top:119px;background:#f4f7fd;padding-left:1px;">ModelDiffViewer.<span style="color:#660e7a;font-weight:bold;font-style:italic">DIFF_SHOW_ROOTID</span>.set(rq, <span style="color:#660e7a;font-weight:bold">myRoot</span>);</div>
<div class="ln" style="left:51px;top:138px;background:#f4f7fd;padding-left:1px;">ModelDiffViewer.<span style="color:#660e7a;font-weight:bold;font-style:italic">DIFF_SHOW_TREE</span>.set(rq, <span style="color:#000080;font-weight:bold">false</span>);</div>
<div class="ln" style="left:51px;top:157px;background:#f4f7fd;padding-left:1px;"><span style="color:#000080;font-weight:bold">return</span>;</div>
<div class="ln" style="left:52px;top:176px;"><span style="color:#000080;font-weight:bold">if</span> (<span style="color:#660e7a;font-weight:bold">myRevisionsExtractor</span>.isLoading()) {</div>
<div class="ln" style="left:68px;top:195px;"><span style="color:#660e7a;font-weight:bold">myDiffPanel</span>.setRequest(<span style="color:#000080;font-weight:bold">new</span> LoadingDiffRequest());</div>
<div class="ln" style="left:52px;top:214px;">} <span style="color:#000080;font-weight:bold">else</span> {</div>
<div class="ln" style="left:68px;top:233px;word-spacing:3px;"><span style="color:#808080;font-style:italic">// FIXME throw an exception from createDiffContent, catch it here and create</span></div>
<div class="ln" style="left:95.2px;top:252px;word-spacing:3px;"><span style="color:#808080;font-style:italic">MessageDiffRequest (there&#x27;s no DiffContent that could do that</span></div>
<div class="ln" style="left:68px;top:271px;"><span style="color:#660e7a;font-weight:bold">myDiffPanel</span>.setRequest(<span style="color:#000080;font-weight:bold">new</span> MessageDiffRequest(<span style="color:#008000;font-weight:bold">&quot;Error&quot;</span>, <span style="color:#008000;font-weight:bold">&quot;Failed to build diff&quot;</span>));</div>
<div class="ln" style="left:52px;top:290px;">}</div>
<div class="ln" style="left:36px;top:309px;">}</div>
<svg class="ab" style="left:0;top:78px" width="1325" height="4"><rect x="0" y="1.3" width="1325" height="1.6" fill="#737373"/></svg>
<svg class="ab" style="left:0;top:97px" width="1325" height="4"><rect x="0" y="1.3" width="1325" height="1.6" fill="#737373"/></svg>
<svg class="ab" style="left:0;top:116px" width="1325" height="4"><rect x="0" y="1.3" width="1325" height="1.6" fill="#737373"/></svg>
<svg class="ab" style="left:0;top:173px" width="1325" height="4"><rect x="0" y="1.3" width="1325" height="1.6" fill="#737373"/></svg>
</div>
<svg class="ab" style="left:610px;top:719px" width="101" height="326">
<path d="M0 80.3H42C48.3 80.3 53.7 80.3 60 80.3H100V175.3H60C53.7 175.3 48.3 213.3 42 213.3H0Z" fill="#c8d8f6"/>
<path d="M0 80.3H42C48.3 80.3 53.7 80.3 60 80.3H100" stroke="#737373" stroke-width="1.4" fill="none"/>
<path d="M0 213.3H42C48.3 213.3 53.7 175.3 60 175.3H100" stroke="#737373" stroke-width="1.4" fill="none"/>
<path d="M0 156.3H42C48.3 156.3 53.7 99.3 60 99.3H100V118.3H60C53.7 118.3 48.3 175.3 42 175.3H0Z" fill="#fefde0"/>
<path d="M0 156.3H42C48.3 156.3 53.7 99.3 60 99.3H100" stroke="#737373" stroke-width="1.4" fill="none"/>
<path d="M0 175.3H42C48.3 175.3 53.7 118.3 60 118.3H100" stroke="#737373" stroke-width="1.4" fill="none"/>
<rect x="0" y="0" width="1" height="326" fill="#d2d2d2"/><rect x="100" y="0" width="1" height="326" fill="#d2d2d2"/>
<path d="M83.1 102.1L90.9 109.9M90.9 102.1L83.1 109.9" stroke="#666" stroke-width="1.0"/>
<path d="M13 82.5L17 87L13 91.5M18 82.5L22 87L18 91.5" stroke="#7a7a7a" stroke-width="1.1" fill="none"/>
</svg>
<div class="ab" style="left:0;top:1031px;width:606px;height:14px;background:#f4f4f4"></div>
<div class="ab" style="left:0;top:1034px;width:373px;height:8px;border-radius:4px;background:#c4c4c4"></div>
<div class="ab" style="left:716px;top:1031px;width:609px;height:14px;background:#f4f4f4"></div>
<div class="ab" style="left:720px;top:1034px;width:372px;height:8px;border-radius:4px;background:#c4c4c4"></div>
<div class="ab" style="left:0px;top:742px;width:10px;height:3px;background:#b4c8f2"></div>
<div class="ab" style="left:0px;top:769px;width:10px;height:6px;background:#b4c8f2"></div>
<div class="ab" style="left:0px;top:777px;width:10px;height:5px;background:#b4c8f2"></div>
<div class="ab" style="left:0px;top:778px;width:10px;height:1px;background:#a6dba4"></div>
<div class="ab" style="left:0px;top:839px;width:10px;height:4px;background:#b4c8f2"></div>
<div class="ab" style="left:0px;top:943.5px;width:10px;height:3px;background:#b4c8f2"></div>
<div class="ab" style="left:0px;top:946px;width:10px;height:4px;background:#fdfbd6"></div>
<div class="ab" style="left:0px;top:950px;width:10px;height:1px;background:#b4c8f2"></div>
<div class="ab" style="left:1309px;top:742px;width:15px;height:3px;background:#b4c8f2"></div>
<div class="ab" style="left:1309px;top:770px;width:15px;height:6px;background:#b4c8f2"></div>
<div class="ab" style="left:1309px;top:778px;width:15px;height:8px;background:#b4c8f2"></div>
<div class="ab" style="left:1309px;top:780px;width:15px;height:1px;background:#a6dba4"></div>
<div class="ab" style="left:1309px;top:786px;width:15px;height:6px;background:#b5a8fa"></div>
<div class="ab" style="left:1309px;top:843px;width:15px;height:3px;background:#b4c8f2"></div>
<div class="ab" style="left:1309px;top:945px;width:15px;height:1px;background:#b4c8f2"></div>
<div class="ab" style="left:1309px;top:946px;width:15px;height:5px;background:#fdfbd6"></div>
<div class="ab" style="left:1309px;top:951px;width:15px;height:1px;background:#b4c8f2"></div>
<svg class="ab" style="left:0px;top:721px" width="13" height="10"><path d="M1.3 4.8L4.8 8.3L11.2 1.6" stroke="#4f9f5f" stroke-width="2.3" fill="none" stroke-linejoin="miter"/></svg>
<svg class="ab" style="left:1308px;top:721px" width="13" height="10"><path d="M1.3 4.8L4.8 8.3L11.2 1.6" stroke="#4f9f5f" stroke-width="2.3" fill="none" stroke-linejoin="miter"/></svg>
<div class="ab" style="left:1317px;top:925px;width:6px;height:34px;border-radius:3px;background:rgba(180,180,180,0.7)"></div>
<div class="ab" style="left:-1px;top:918px;width:5.5px;height:41px;border-radius:3px;background:rgba(180,180,180,0.7)"></div>
<div class="ab" style="left:0;top:1044.5px;width:1325px;height:3.5px;background:linear-gradient(90deg,#1c3850 0px,#1e3a52 440px,#556060 540px,#9a9888 610px,#9a9888 760px,#4e6478 830px,#3e5a78 1000px,#2a4660 1325px)"></div>
<svg class="ab" style="left:1311px;top:1032px" width="14" height="14"><path d="M14 2.5Q14 12.5 3 12.5H14Z" fill="#1c3850"/></svg>
<svg class="ab" style="left:0;top:1036px" width="10" height="10"><path d="M0 4.5Q1.5 9 7 9H0Z" fill="#1c3850"/></svg>
<div class="big" style="left:1181px;top:1054px">Après</div>
</body></html>
